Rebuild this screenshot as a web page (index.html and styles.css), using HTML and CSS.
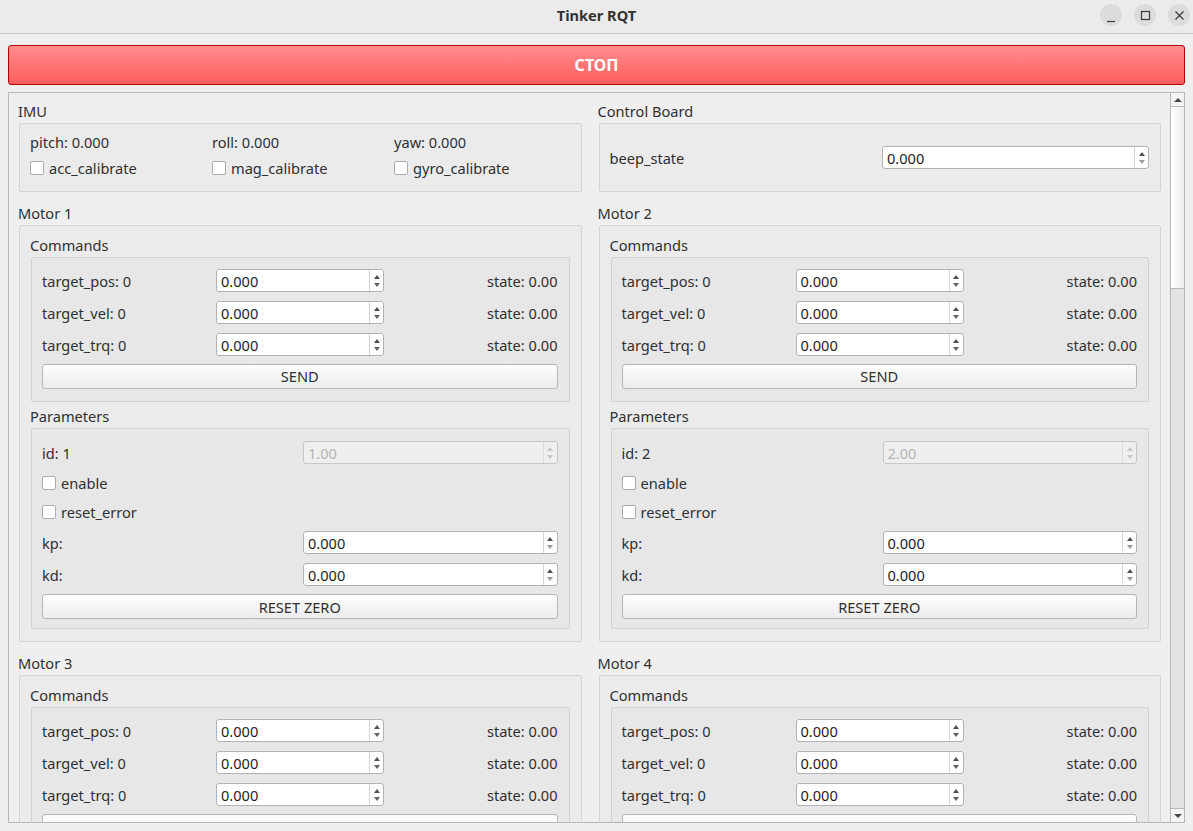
FILE: index.html
```html
<!DOCTYPE html>
<html lang="en">
<head>
<meta charset="utf-8">
<title>Tinker RQT</title>
<link rel="stylesheet" href="styles.css">
</head>
<body>
<div class="titlebar">
  <div></div>
  <div class="title">Tinker RQT</div>
  <div class="wincontrols">
    <span class="wbtn"><svg width="22" height="22" viewBox="0 0 22 22"><path d="M7 17.5h8" stroke="#3a3a3a" stroke-width="1.2"/></svg></span>
    <span class="wbtn"><svg width="22" height="22" viewBox="0 0 22 22"><rect x="7.5" y="7.5" width="8" height="8" fill="none" stroke="#3a3a3a" stroke-width="1.2"/></svg></span>
    <span class="wbtn"><svg width="22" height="22" viewBox="0 0 22 22"><path d="M7.5 7.5l8 8M15.5 7.5l-8 8" stroke="#3a3a3a" stroke-width="1.2"/></svg></span>
  </div>
</div>
<div class="main">
  <div class="stop">СТОП</div>
  <div class="scroll">
    <div class="viewport">
      <div class="grid">
        <!-- IMU -->
        <div class="group">
          <div class="gtitle">IMU</div>
          <div class="frame imu">
            <div class="lbl">pitch: 0.000</div>
            <div class="lbl">roll: 0.000</div>
            <div class="lbl">yaw: 0.000</div>
            <div class="check"><span class="cb"></span><span class="lbl">acc_calibrate</span></div>
            <div class="check"><span class="cb"></span><span class="lbl">mag_calibrate</span></div>
            <div class="check"><span class="cb"></span><span class="lbl">gyro_calibrate</span></div>
          </div>
        </div>
        <!-- Control Board -->
        <div class="group">
          <div class="gtitle">Control Board</div>
          <div class="frame board">
            <div class="board-label lbl">beep_state</div>
            <div class="spin wide"><span class="val">0.000</span><span class="arrows"><i class="up"></i><i class="dn light"></i></span></div>
          </div>
        </div>

        <!-- Motor 1 -->
        <div class="group">
          <div class="gtitle">Motor 1</div>
          <div class="frame motor">
            <div class="gtitle">Commands</div>
            <div class="frame inner commands">
              <div class="lbl">target_pos: 0</div>
              <div class="spin"><span class="val">0.000</span><span class="arrows"><i class="up"></i><i class="dn"></i></span></div>
              <div class="state lbl">state: 0.00</div>
              <div class="lbl">target_vel: 0</div>
              <div class="spin"><span class="val">0.000</span><span class="arrows"><i class="up"></i><i class="dn"></i></span></div>
              <div class="state lbl">state: 0.00</div>
              <div class="lbl">target_trq: 0</div>
              <div class="spin"><span class="val">0.000</span><span class="arrows"><i class="up"></i><i class="dn"></i></span></div>
              <div class="state lbl">state: 0.00</div>
              <div class="btn span3">SEND</div>
            </div>
            <div class="gtitle sub2">Parameters</div>
            <div class="frame inner params">
              <div class="prow"><span class="lbl">id: 1</span><div class="spin disabled"><span class="val">1.00</span><span class="arrows"><i class="up"></i><i class="dn"></i></span></div></div>
              <div class="check crow"><span class="cb"></span><span class="lbl">enable</span></div>
              <div class="check crow"><span class="cb"></span><span class="lbl">reset_error</span></div>
              <div class="prow"><span class="lbl">kp:</span><div class="spin"><span class="val">0.000</span><span class="arrows"><i class="up"></i><i class="dn light"></i></span></div></div>
              <div class="prow"><span class="lbl">kd:</span><div class="spin"><span class="val">0.000</span><span class="arrows"><i class="up"></i><i class="dn light"></i></span></div></div>
              <div class="btn reset">RESET ZERO</div>
            </div>
          </div>
        </div>

        <!-- Motor 2 -->
        <div class="group">
          <div class="gtitle">Motor 2</div>
          <div class="frame motor">
            <div class="gtitle">Commands</div>
            <div class="frame inner commands">
              <div class="lbl">target_pos: 0</div>
              <div class="spin"><span class="val">0.000</span><span class="arrows"><i class="up"></i><i class="dn"></i></span></div>
              <div class="state lbl">state: 0.00</div>
              <div class="lbl">target_vel: 0</div>
              <div class="spin"><span class="val">0.000</span><span class="arrows"><i class="up"></i><i class="dn"></i></span></div>
              <div class="state lbl">state: 0.00</div>
              <div class="lbl">target_trq: 0</div>
              <div class="spin"><span class="val">0.000</span><span class="arrows"><i class="up"></i><i class="dn"></i></span></div>
              <div class="state lbl">state: 0.00</div>
              <div class="btn span3">SEND</div>
            </div>
            <div class="gtitle sub2">Parameters</div>
            <div class="frame inner params">
              <div class="prow"><span class="lbl">id: 2</span><div class="spin disabled"><span class="val">2.00</span><span class="arrows"><i class="up"></i><i class="dn"></i></span></div></div>
              <div class="check crow"><span class="cb"></span><span class="lbl">enable</span></div>
              <div class="check crow"><span class="cb"></span><span class="lbl">reset_error</span></div>
              <div class="prow"><span class="lbl">kp:</span><div class="spin"><span class="val">0.000</span><span class="arrows"><i class="up"></i><i class="dn light"></i></span></div></div>
              <div class="prow"><span class="lbl">kd:</span><div class="spin"><span class="val">0.000</span><span class="arrows"><i class="up"></i><i class="dn light"></i></span></div></div>
              <div class="btn reset">RESET ZERO</div>
            </div>
          </div>
        </div>

        <!-- Motor 3 -->
        <div class="group">
          <div class="gtitle">Motor 3</div>
          <div class="frame motor">
            <div class="gtitle">Commands</div>
            <div class="frame inner commands">
              <div class="lbl">target_pos: 0</div>
              <div class="spin"><span class="val">0.000</span><span class="arrows"><i class="up"></i><i class="dn"></i></span></div>
              <div class="state lbl">state: 0.00</div>
              <div class="lbl">target_vel: 0</div>
              <div class="spin"><span class="val">0.000</span><span class="arrows"><i class="up"></i><i class="dn"></i></span></div>
              <div class="state lbl">state: 0.00</div>
              <div class="lbl">target_trq: 0</div>
              <div class="spin"><span class="val">0.000</span><span class="arrows"><i class="up"></i><i class="dn"></i></span></div>
              <div class="state lbl">state: 0.00</div>
              <div class="btn span3">SEND</div>
            </div>
            <div class="gtitle sub2">Parameters</div>
            <div class="frame inner params">
              <div class="prow"><span class="lbl">id: 3</span><div class="spin disabled"><span class="val">3.00</span><span class="arrows"><i class="up"></i><i class="dn"></i></span></div></div>
              <div class="check crow"><span class="cb"></span><span class="lbl">enable</span></div>
              <div class="check crow"><span class="cb"></span><span class="lbl">reset_error</span></div>
              <div class="prow"><span class="lbl">kp:</span><div class="spin"><span class="val">0.000</span><span class="arrows"><i class="up"></i><i class="dn light"></i></span></div></div>
              <div class="prow"><span class="lbl">kd:</span><div class="spin"><span class="val">0.000</span><span class="arrows"><i class="up"></i><i class="dn light"></i></span></div></div>
              <div class="btn reset">RESET ZERO</div>
            </div>
          </div>
        </div>

        <!-- Motor 4 -->
        <div class="group">
          <div class="gtitle">Motor 4</div>
          <div class="frame motor">
            <div class="gtitle">Commands</div>
            <div class="frame inner commands">
              <div class="lbl">target_pos: 0</div>
              <div class="spin"><span class="val">0.000</span><span class="arrows"><i class="up"></i><i class="dn"></i></span></div>
              <div class="state lbl">state: 0.00</div>
              <div class="lbl">target_vel: 0</div>
              <div class="spin"><span class="val">0.000</span><span class="arrows"><i class="up"></i><i class="dn"></i></span></div>
              <div class="state lbl">state: 0.00</div>
              <div class="lbl">target_trq: 0</div>
              <div class="spin"><span class="val">0.000</span><span class="arrows"><i class="up"></i><i class="dn"></i></span></div>
              <div class="state lbl">state: 0.00</div>
              <div class="btn span3">SEND</div>
            </div>
            <div class="gtitle sub2">Parameters</div>
            <div class="frame inner params">
              <div class="prow"><span class="lbl">id: 4</span><div class="spin disabled"><span class="val">4.00</span><span class="arrows"><i class="up"></i><i class="dn"></i></span></div></div>
              <div class="check crow"><span class="cb"></span><span class="lbl">enable</span></div>
              <div class="check crow"><span class="cb"></span><span class="lbl">reset_error</span></div>
              <div class="prow"><span class="lbl">kp:</span><div class="spin"><span class="val">0.000</span><span class="arrows"><i class="up"></i><i class="dn light"></i></span></div></div>
              <div class="prow"><span class="lbl">kd:</span><div class="spin"><span class="val">0.000</span><span class="arrows"><i class="up"></i><i class="dn light"></i></span></div></div>
              <div class="btn reset">RESET ZERO</div>
            </div>
          </div>
        </div>
      </div>
    </div>
    <div class="sbar">
      <div class="sbtn"><i class="up"></i></div>
      <div class="handle"></div>
      <div class="track"></div>
      <div class="sbtn down"><i class="dn"></i></div>
    </div>
  </div>
</div>
</body>
</html>
```

FILE: styles.css
```css
* { box-sizing: border-box; }

html, body { margin: 0; padding: 0; }

body {
  width: 1193px;
  height: 831px;
  overflow: hidden;
  background: #efefef;
  font-family: "Noto Sans", "DejaVu Sans", sans-serif;
  font-size: 14.6px;
  line-height: 18px;
  color: #303030;
}

/* ---------- title bar ---------- */
.titlebar {
  height: 34px;
  border-bottom: 1px solid #c8c8c8;
  background: #ebebeb;
  display: grid;
  grid-template-columns: 1fr auto 1fr;
  align-items: center;
}
.title {
  font-weight: bold;
  font-size: 14.6px;
  color: #333;
  padding-bottom: 3px;
}
.wincontrols {
  justify-self: end;
  align-self: start;
  margin-top: 4px;
  padding-right: 3px;
  display: flex;
  gap: 12px;
}
.wbtn {
  width: 22px;
  height: 22px;
  border-radius: 50%;
  background: #dcdcdc;
  display: block;
}
.wbtn svg { display: block; }

/* ---------- main ---------- */
.main {
  height: 797px;
  padding: 11px 8px 8px 8px;
  display: flex;
  flex-direction: column;
  gap: 7px;
}
.stop {
  height: 40px;
  flex: none;
  border: 1px solid #b40000;
  border-radius: 3px;
  background: linear-gradient(#ff8d8d, #ff5d5d);
  color: #fff;
  font-weight: bold;
  font-size: 16px;
  display: flex;
  align-items: center;
  justify-content: center;
}
.scroll {
  height: 731px;
  flex: none;
  border: 1px solid #b8b8b8;
  display: flex;
}
.viewport {
  flex: 1;
  overflow: hidden;
  padding: 9px 9px 0 10px;
}
.grid {
  display: grid;
  grid-template-columns: 1fr 1fr;
  column-gap: 17px;
  row-gap: 12px;
}

/* ---------- group boxes ---------- */
.gtitle {
  height: 18px;
  line-height: 18px;
  margin-left: -1px;
  white-space: nowrap;
}
.lbl {
  white-space: nowrap;
}
.frame {
  margin-top: 3px;
  border: 1px solid #d4d4d4;
  border-radius: 2px;
  background: #ebebeb;
}
.frame.inner {
  background: #e7e7e7;
  border-color: #d2d2d2;
}

.imu {
  height: 69px;
  padding: 9px 10px 0 10px;
  display: grid;
  grid-template-columns: 182px 182px 1fr;
  grid-auto-rows: 18px;
  row-gap: 8px;
  align-items: center;
}

.board {
  height: 69px;
  padding: 0 11px 0 10px;
  display: flex;
  align-items: center;
}
.board-label { flex: 1; }

.check {
  display: flex;
  align-items: center;
  gap: 5px;
}
.cb {
  width: 14px;
  height: 14px;
  flex: none;
  border: 1px solid #acacac;
  border-radius: 2px;
  background: #fff;
}

.motor {
  padding: 10px 11px 12px 11px;
}
.sub2 { margin-top: 5px; }

.commands {
  padding: 11px 11px 13px 10px;
  display: grid;
  grid-template-columns: 174px 168px 1fr;
  grid-auto-rows: 23px;
  row-gap: 9px;
  align-items: center;
}
.state { justify-self: end; }
.span3 { grid-column: 1 / -1; margin-top: -1px; }

.params {
  padding: 12px 11px 9px 10px;
  display: flex;
  flex-direction: column;
  gap: 9px;
}
.prow {
  display: grid;
  grid-template-columns: 261px 1fr;
  align-items: center;
  height: 23px;
}
.crow { height: 20px; }
.reset { margin-top: -1px; }

/* ---------- widgets ---------- */
.spin {
  height: 23px;
  border: 1px solid #b2b2b2;
  border-radius: 3px;
  background: #fff;
  display: flex;
  color: #1e1e1e;
}
.spin.wide { width: 267px; }
.spin .val {
  flex: 1;
  padding-left: 4px;
  padding-top: 1px;
  line-height: 20px;
}
.arrows {
  width: 14px;
  border-left: 1px solid #d6d6d6;
  display: flex;
  flex-direction: column;
  align-items: center;
  justify-content: center;
  gap: 4px;
}
.up, .dn {
  display: block;
  width: 0;
  height: 0;
  border-left: 3.5px solid transparent;
  border-right: 3.5px solid transparent;
}
.up { border-bottom: 4px solid #505050; }
.dn { border-top: 4px solid #606060; }
.dn.light { border-top-color: #9a9a9a; }

.spin.disabled {
  background: #efefef;
  border-color: #c6c6c6;
  color: #b4b4b4;
}
.spin.disabled .arrows { border-left-color: #dcdcdc; }
.spin.disabled .up { border-bottom-color: #c8c8c8; }
.spin.disabled .dn { border-top-color: #c8c8c8; }

.btn {
  height: 25px;
  border: 1px solid #b6b6b6;
  border-radius: 3px;
  background: linear-gradient(#fdfdfd, #ececec);
  display: flex;
  align-items: center;
  justify-content: center;
}

/* ---------- scrollbar ---------- */
.sbar {
  width: 14px;
  flex: none;
  border-left: 1px solid #b8b8b8;
  background: #e3e3e3;
  display: flex;
  flex-direction: column;
}
.sbtn {
  height: 14px;
  flex: none;
  background: #f4f4f4;
  border-bottom: 1px solid #b8b8b8;
  display: flex;
  align-items: center;
  justify-content: center;
}
.sbtn.down {
  border-bottom: none;
  border-top: 1px solid #b8b8b8;
}
.sbtn .up { border-bottom-color: #4a4a4a; border-left-width: 4px; border-right-width: 4px; }
.sbtn .dn { border-top-color: #4a4a4a; border-left-width: 4px; border-right-width: 4px; }
.handle {
  height: 182px;
  flex: none;
  background: linear-gradient(90deg, #ffffff, #eeeeee);
  border-bottom: 1px solid #b8b8b8;
}
.track { flex: 1; }
```
